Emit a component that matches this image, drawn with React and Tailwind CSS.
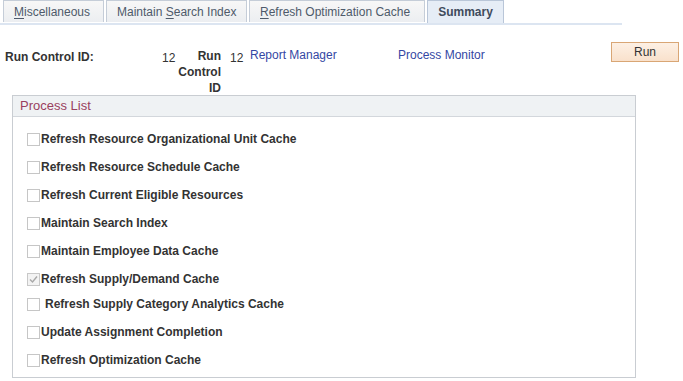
import React from 'react';

const tabs = [
  { pre: '', key: 'M', rest: 'iscellaneous', w: 'w-[101px]' },
  { pre: 'Maintain\u00a0', key: 'S', rest: 'earch Index', w: 'w-[141px]' },
  { pre: '', key: 'R', rest: 'efresh Optimization Cache', w: 'w-[176px]' },
];

const processes = [
  { label: 'Refresh Resource Organizational Unit Cache' },
  { label: 'Refresh Resource Schedule Cache' },
  { label: 'Refresh Current Eligible Resources' },
  { label: 'Maintain Search Index' },
  { label: 'Maintain Employee Data Cache' },
  { label: 'Refresh Supply/Demand Cache', checked: true },
  { label: 'Refresh Supply Category Analytics Cache', odd: true },
  { label: 'Update Assignment Completion' },
  { label: 'Refresh Optimization Cache' },
];

function Checkbox({ checked }) {
  if (checked) {
    return (
      <span className="w-[13px] h-[13px] border border-[#c8c8c8] bg-[#f3f3f3] flex items-center justify-center shrink-0">
        <svg width="9" height="9" viewBox="0 0 9 9">
          <path d="M1 4.5 L3.5 7 L8 1.5" fill="none" stroke="#a8a8a8" strokeWidth="1.4" />
        </svg>
      </span>
    );
  }
  return <span className="block w-[13px] h-[13px] border border-[#c6c6c6] bg-white shrink-0" />;
}

export default function App() {
  return (
    <div className="w-[683px] h-[381px] bg-white overflow-hidden text-[12px] leading-[16px]" style={{ fontFamily: '"Liberation Sans", Arial, sans-serif' }}>
      {/* tabs */}
      <div className="w-[622px] border-b-2 border-[#dce5f1]">
        <div className="flex items-end gap-[2px] pl-[3px] h-[23px]">
          {tabs.map((t) => (
            <div
              key={t.rest}
              className={`${t.w} h-[22px] mb-[1px] border border-[#c5cdd8] border-b-0 bg-gradient-to-b from-[#f7f7f7] to-[#eceef1] pl-[10px] pt-[3px] text-[#4e5a6a] whitespace-nowrap`}
            >
              <span>{t.pre}<span className="underline underline-offset-2">{t.key}</span>{t.rest}</span>
            </div>
          ))}
          <div className="w-[77px] h-[23px] border border-[#b9c6d8] border-b-0 bg-[#e6edf6] flex items-start pt-[3px] justify-center font-bold text-[#3f4b5c]">
            Summary
          </div>
        </div>
      </div>

      {/* run control */}
      <div className="flex items-start h-[70px] pt-[16px] text-[#333]">
        <div className="w-[157px] pl-[5px] pt-[8px] font-bold">Run Control ID:</div>
        <div className="w-[20px] pt-[9px] pl-[5px]">12</div>
        <div className="w-[44px] pt-[7px] font-bold text-right leading-[16px]">
          <div>Run</div>
          <div>Control</div>
          <div>ID</div>
        </div>
        <div className="w-[29px] pt-[9px] pl-[9px]">12</div>
        <div className="w-[148px] pt-[6px] text-[#3447a3]">Report Manager</div>
        <div className="w-[213px] pt-[6px] text-[#3447a3]">Process Monitor</div>
        <button className="w-[68px] h-[20px] mt-[1px] border border-[#d9a675] bg-gradient-to-b from-[#fdf0e4] to-[#f9e1cc] text-[#333] text-[12px] leading-none">
          Run
        </button>
      </div>

      {/* process list */}
      <div className="ml-[12px] w-[624px] h-[283px] border border-[#c9cdd2]">
        <div className="h-[21px] bg-[#eff2f4] border-b border-[#d3d7dc] pl-[7px] pt-[2px] text-[13px] text-[#9a3f5e]">
          Process List
        </div>
        <div className="pt-[8px]">
          {processes.map((p) =>
            p.odd ? (
              <div key={p.label} className="h-[25px] flex items-start pt-[3px] pl-[14px] font-bold text-[#333]">
                <span className="block mt-[2px]"><Checkbox /></span>
                <span className="ml-[5px]">{p.label}</span>
              </div>
            ) : (
              <div key={p.label} className="h-[28px] flex items-center gap-[1px] pl-[14px] font-bold text-[#333]">
                <Checkbox checked={p.checked} />
                <span>{p.label}</span>
              </div>
            )
          )}
        </div>
      </div>
    </div>
  );
}
